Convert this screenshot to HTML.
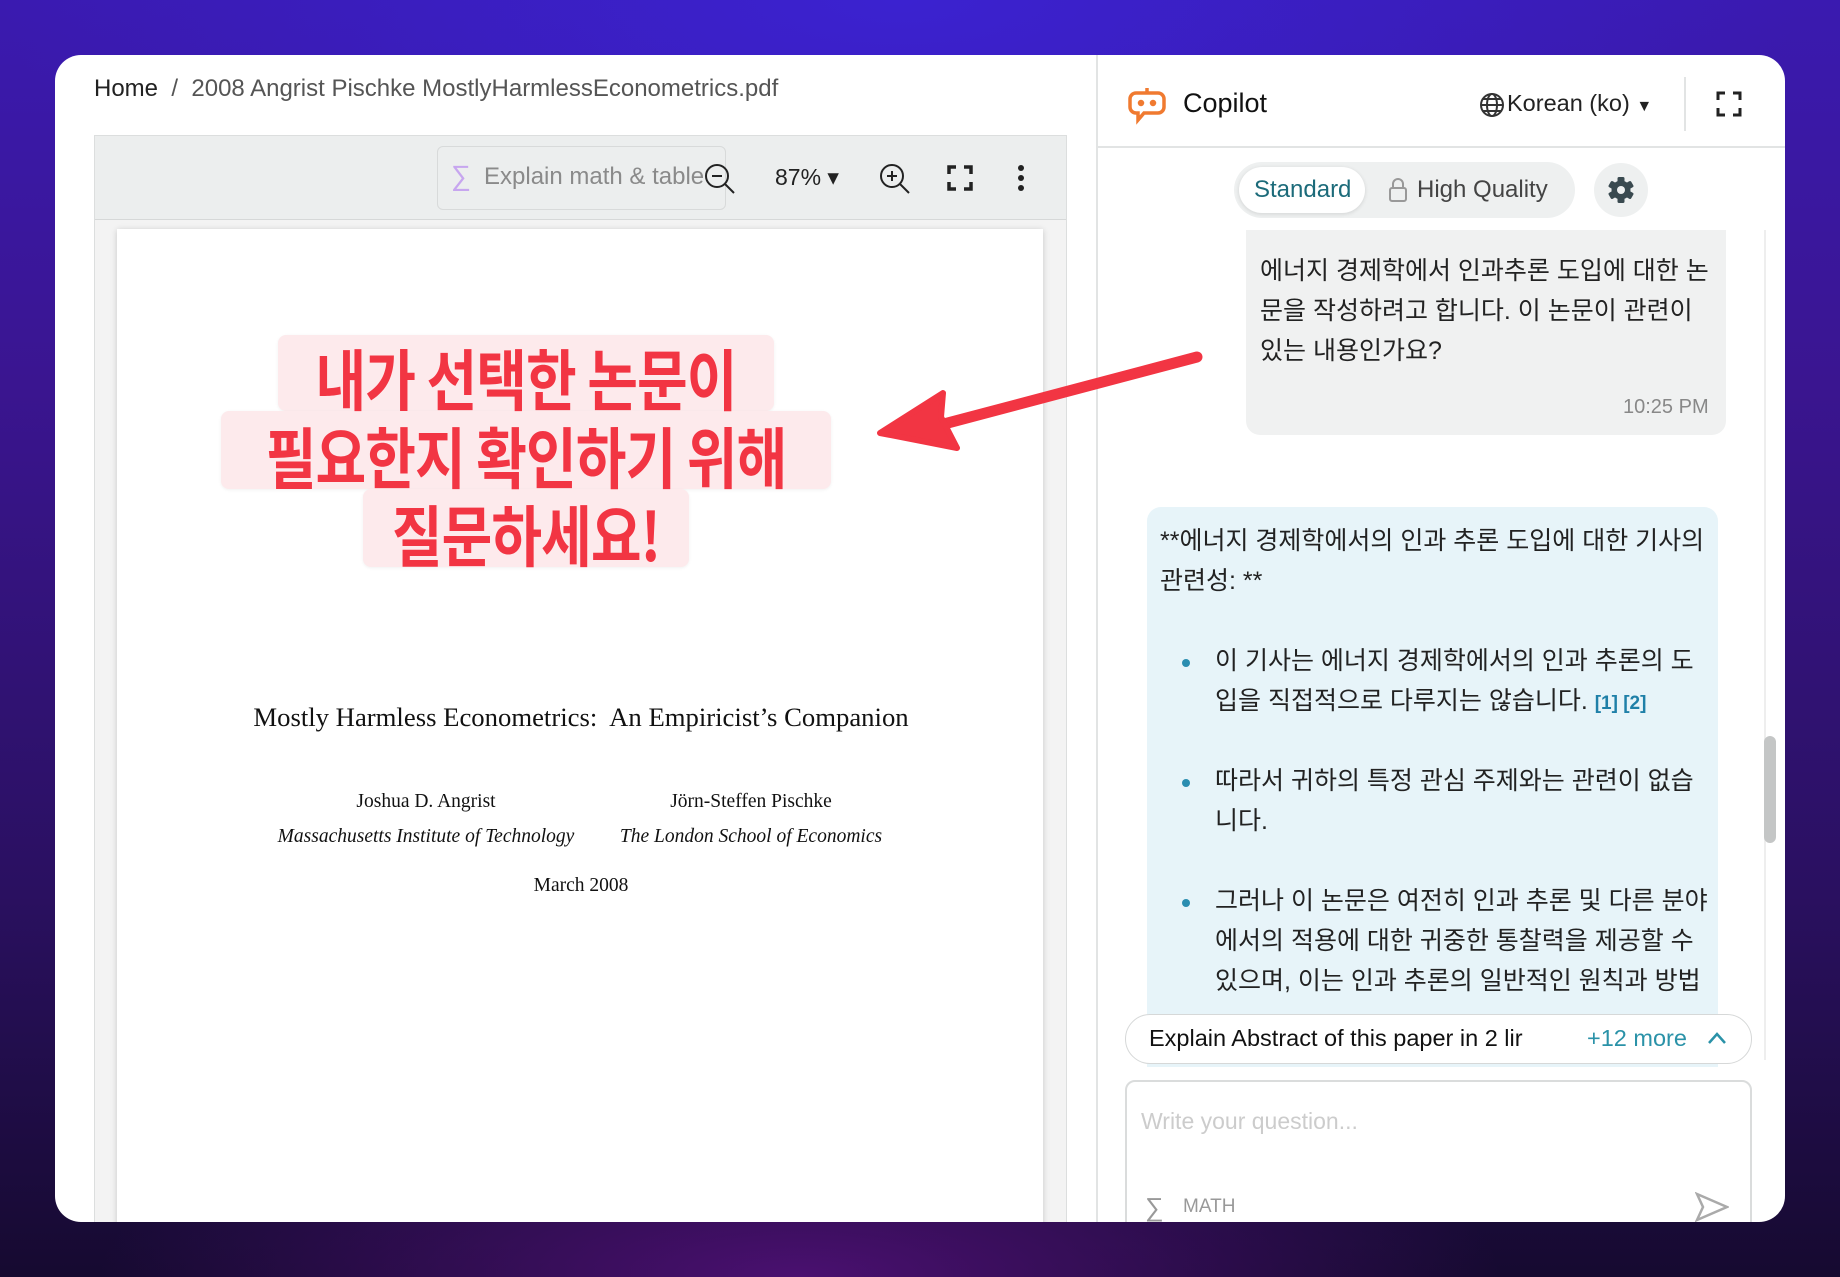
<!DOCTYPE html>
<html><head><meta charset="utf-8"><style>
*{margin:0;padding:0;box-sizing:border-box}
body{width:1840px;height:1277px;overflow:hidden;position:relative;font-family:"Liberation Sans","Noto Sans CJK KR",sans-serif;
background:radial-gradient(ellipse 900px 300px at 900px 0px,#3b22d0 0%,rgba(59,34,208,0) 100%),radial-gradient(ellipse 700px 200px at 800px 1277px,#4a1070 0%,rgba(74,16,112,0) 100%),linear-gradient(180deg,#3a1ab0 0%,#3a1590 30%,#2a1060 70%,#160a30 100%);}
.abs{position:absolute}
.win{left:55px;top:55px;width:1730px;height:1167px;background:#fff;border-radius:26px;overflow:hidden}
.chat{font-size:25px;color:#222;line-height:40px}
.hl{position:absolute;background:#fdeaec;border-radius:8px;box-shadow:0 1px 3px rgba(0,0,0,.06)}
.ann{position:absolute;color:#f23543;font-weight:700;font-size:58px;font-family:"Noto Sans CJK KR",sans-serif;white-space:nowrap;letter-spacing:-1px;transform:scale(0.95,1.15);transform-origin:center}
.serif{font-family:"Liberation Serif",serif;color:#111;position:absolute;white-space:nowrap;transform:translateX(-50%)}
</style></head><body>
<div class="abs win">
 <div class="abs" style="left:39px;top:20px;font-size:24px;color:#555;white-space:nowrap"><span style="color:#222">Home</span>&nbsp;&nbsp;/&nbsp;&nbsp;2008 Angrist Pischke MostlyHarmlessEconometrics.pdf</div>
 <div class="abs" style="left:39px;top:80px;width:973px;height:1100px;border:1px solid #dcdede;background:#f3f3f3">
  <div class="abs" style="left:0;top:0;width:971px;height:84px;background:#eceeee;border-bottom:1px solid #d6d8d8"></div>
  <div class="abs" style="left:342px;top:10px;width:289px;height:64px;border:1px solid #d8dada;border-radius:6px;background:#eceeee"></div>
  <div class="abs" style="left:356px;top:24px;font-size:28px;color:#c7a6ef">∑</div>
  <div class="abs" style="left:389px;top:27px;font-size:24px;color:#8a8a8a">Explain math &amp; table</div>
  <svg class="abs" style="left:608px;top:26px" width="34" height="34" viewBox="0 0 34 34" fill="none" stroke="#222" stroke-width="2"><circle cx="14" cy="14" r="11"/><path d="M9 14h10M22 22l9 9"/></svg>
  <div class="abs" style="left:680px;top:28px;font-size:23px;color:#222">87% ▾</div>
  <svg class="abs" style="left:783px;top:26px" width="34" height="34" viewBox="0 0 34 34" fill="none" stroke="#222" stroke-width="2"><circle cx="14" cy="14" r="11"/><path d="M9 14h10M14 9v10M22 22l9 9"/></svg>
  <svg class="abs" style="left:852px;top:29px" width="26" height="26" viewBox="0 0 26 26" fill="none" stroke="#222" stroke-width="3.5"><path d="M2 9V2h7M17 2h7v7M24 17v7h-7M9 24H2v-7"/></svg>
  <svg class="abs" style="left:922px;top:28px" width="8" height="28" viewBox="0 0 8 28" fill="#222"><circle cx="4" cy="4" r="3"/><circle cx="4" cy="14" r="3"/><circle cx="4" cy="24" r="3"/></svg>
  <div class="abs" style="left:22px;top:93px;width:926px;height:1020px;background:#fff;box-shadow:0 1px 6px rgba(0,0,0,.18)"></div>
 </div>
 <div class="serif" style="left:526px;top:647px;font-size:26.7px">Mostly Harmless Econometrics:&nbsp; An Empiricist’s Companion</div>
 <div class="serif" style="left:371px;top:736px;font-size:19.5px">Joshua D. Angrist</div>
 <div class="serif" style="left:696px;top:736px;font-size:19.5px">Jörn-Steffen Pischke</div>
 <div class="serif" style="left:371px;top:771px;font-size:19.5px;font-style:italic">Massachusetts Institute of Technology</div>
 <div class="serif" style="left:696px;top:771px;font-size:19.5px;font-style:italic">The London School of Economics</div>
 <div class="serif" style="left:526px;top:820px;font-size:19.5px">March 2008</div>

 <div class="abs" style="left:1041px;top:0;width:2px;height:1167px;background:#e2e4e4"></div>
 <div class="abs" style="left:1043px;top:91px;width:687px;height:2px;background:#e2e4e4"></div>
 <svg class="abs" style="left:1073px;top:30px" width="38" height="42" viewBox="0 0 38 42" fill="none" stroke="#f07a30" stroke-width="3.5"><path d="M19 3v5"/><path d="M8 8h22a6 6 0 0 1 6 6v8a6 6 0 0 1-6 6H16l-6 7v-7H8a6 6 0 0 1-6-6v-8a6 6 0 0 1 6-6z"/><circle cx="13" cy="18" r="1.5" fill="#f07a30"/><circle cx="25" cy="18" r="1.5" fill="#f07a30"/></svg>
 <div class="abs" style="left:1128px;top:33px;font-size:27px;color:#111">Copilot</div>
 <svg class="abs" style="left:1424px;top:37px" width="26" height="26" viewBox="0 0 26 26" fill="none" stroke="#333" stroke-width="2"><circle cx="13" cy="13" r="11"/><ellipse cx="13" cy="13" rx="5" ry="11"/><path d="M2 13h22M4 7h18M4 19h18"/></svg>
 <div class="abs" style="left:1452px;top:35px;font-size:23.5px;color:#222">Korean (ko) <span style="font-size:16px">▼</span></div>
 <div class="abs" style="left:1629px;top:22px;width:2px;height:54px;background:#e2e4e4"></div>
 <svg class="abs" style="left:1661px;top:36px" width="26" height="26" viewBox="0 0 26 26" fill="none" stroke="#222" stroke-width="3"><path d="M2 9V2h7M17 2h7v7M24 17v7h-7M9 24H2v-7"/></svg>
 <div class="abs" style="left:1179px;top:107px;width:341px;height:56px;background:#eef0f0;border-radius:28px"></div>
 <div class="abs" style="left:1184px;top:112px;width:126px;height:46px;background:#fff;border-radius:23px;box-shadow:0 1px 4px rgba(0,0,0,.12)"></div>
 <div class="abs" style="left:1199px;top:121px;font-size:24px;color:#1c6b7a">Standard</div>
 <svg class="abs" style="left:1333px;top:122px" width="20" height="26" viewBox="0 0 20 26" fill="none" stroke="#999" stroke-width="2"><rect x="2" y="11" width="16" height="13" rx="2"/><path d="M5 11V7a5 5 0 0 1 10 0v4"/></svg>
 <div class="abs" style="left:1362px;top:121px;font-size:24px;color:#444">High Quality</div>
 <div class="abs" style="left:1539px;top:108px;width:54px;height:54px;border-radius:27px;background:#eef0f0"></div>
 <svg class="abs" style="left:1552px;top:121px" width="28" height="28" viewBox="0 0 28 28"><g fill="#3a4a50" transform="translate(14 14)"><rect x="-3.5" y="-13" width="7" height="26" rx="1.5"/><rect x="-3.5" y="-13" width="7" height="26" rx="1.5" transform="rotate(60)"/><rect x="-3.5" y="-13" width="7" height="26" rx="1.5" transform="rotate(120)"/><circle r="9.5"/></g><circle cx="14" cy="14" r="4" fill="#eef0f0"/></svg>
 <div class="abs" style="left:1709px;top:175px;width:2px;height:830px;background:#eee"></div>
 <div class="abs" style="left:1709px;top:681px;width:12px;height:107px;border-radius:6px;background:#c4c6c6"></div>
 <div class="abs" style="left:1191px;top:175px;width:480px;height:205px;background:#f0f1f1;border-radius:0 0 14px 14px"></div>
 <div class="abs chat" style="left:1205px;top:196px;width:470px;white-space:nowrap">에너지 경제학에서 인과추론 도입에 대한 논<br>문을 작성하려고 합니다. 이 논문이 관련이<br>있는 내용인가요?</div>
 <div class="abs" style="left:1568px;top:341px;font-size:20px;color:#888">10:25 PM</div>
 <div class="abs" style="left:1092px;top:452px;width:571px;height:560px;background:#e7f4f9;border-radius:14px 14px 0 0"></div>
 <div class="abs chat" style="left:1105px;top:466px;width:560px;white-space:nowrap">**에너지 경제학에서의 인과 추론 도입에 대한 기사의<br>관련성: **</div>
 <div class="abs" style="left:1127px;top:604px;width:8px;height:8px;border-radius:4px;background:#2a8db0"></div>
 <div class="abs chat" style="left:1160px;top:586px;width:520px;white-space:nowrap">이 기사는 에너지 경제학에서의 인과 추론의 도<br>입을 직접적으로 다루지는 않습니다. <span style="color:#1f80a8;font-weight:700;font-size:19px">[1] [2]</span></div>
 <div class="abs" style="left:1127px;top:724px;width:8px;height:8px;border-radius:4px;background:#2a8db0"></div>
 <div class="abs chat" style="left:1160px;top:706px;width:520px;white-space:nowrap">따라서 귀하의 특정 관심 주제와는 관련이 없습<br>니다.</div>
 <div class="abs" style="left:1127px;top:844px;width:8px;height:8px;border-radius:4px;background:#2a8db0"></div>
 <div class="abs chat" style="left:1160px;top:826px;width:520px;white-space:nowrap">그러나 이 논문은 여전히 인과 추론 및 다른 분야<br>에서의 적용에 대한 귀중한 통찰력을 제공할 수<br>있으며, 이는 인과 추론의 일반적인 원칙과 방법</div>
 <div class="abs" style="left:1070px;top:959px;width:627px;height:50px;border:1px solid #d6d8d8;border-radius:25px;background:#fff"></div>
 <div class="abs" style="left:1094px;top:970px;font-size:23.5px;color:#111">Explain Abstract of this paper in 2 lir</div>
 <div class="abs" style="left:1532px;top:970px;font-size:23.5px;color:#2a92a8">+12 more</div>
 <svg class="abs" style="left:1652px;top:976px" width="20" height="14" viewBox="0 0 20 14" fill="none" stroke="#2a92a8" stroke-width="2.5"><path d="M2 12l8-9 8 9"/></svg>
 <div class="abs" style="left:1070px;top:1025px;width:627px;height:160px;border:2px solid #dadcdc;border-radius:10px;background:#fff"></div>
 <div class="abs" style="left:1086px;top:1053px;font-size:23px;color:#ccc">Write your question...</div>
 <div class="abs" style="left:1090px;top:1137px;font-size:26px;color:#999">∑</div>
 <div class="abs" style="left:1128px;top:1141px;font-size:19px;color:#999">MATH</div>
 <svg class="abs" style="left:1640px;top:1137px" width="34" height="30" viewBox="0 0 34 30" fill="none" stroke="#aaa" stroke-width="2.5"><path d="M2 2l30 13L2 28l6-13z"/></svg>

 <div class="hl" style="left:223px;top:280px;width:496px;height:76px"></div>
 <div class="hl" style="left:166px;top:356px;width:610px;height:78px"></div>
 <div class="hl" style="left:308px;top:434px;width:326px;height:78px"></div>
 <div class="ann" style="left:471px;top:279px;width:0;display:flex;justify-content:center">내가 선택한 논문이</div>
 <div class="ann" style="left:471px;top:357px;width:0;display:flex;justify-content:center">필요한지 확인하기 위해</div>
 <div class="ann" style="left:471px;top:435px;width:0;display:flex;justify-content:center">질문하세요!</div>
 <svg class="abs" style="left:0;top:0" width="1730" height="1167">
  <path d="M1142 302 L870 374" stroke="#f23543" stroke-width="11" stroke-linecap="round"/>
  <path d="M825 378 L888 338 L886 362 L902 393 Z" fill="#f23543" stroke="#f23543" stroke-width="6" stroke-linejoin="round"/>
 </svg>
</div>
</body></html>
